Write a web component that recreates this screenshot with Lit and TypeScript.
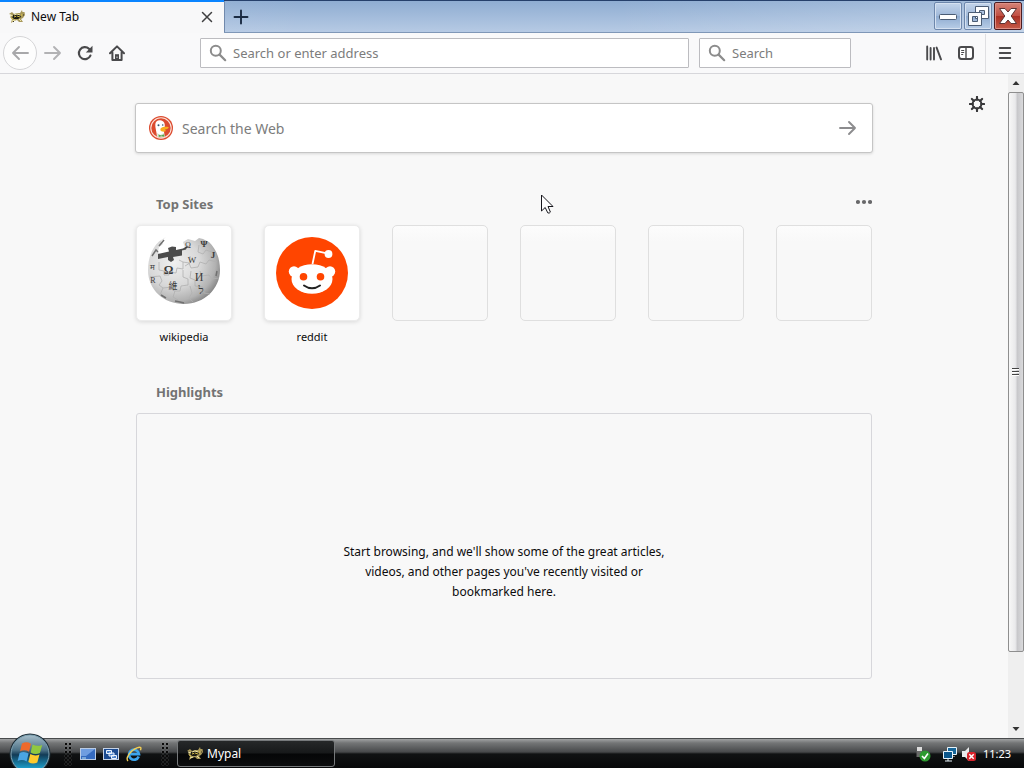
import { LitElement, html, css, svg } from "lit";
import { customElement, property } from "lit/decorators.js";

const svgIcon = (name: string, size: number, view: string, body: unknown) =>
  html`<svg class="ico ${name}" width=${size} height=${size} viewBox=${view} aria-hidden="true">${body}</svg>`;

const mascot = svgIcon("mascot", 16, "0 0 16 16", svg`
  <path d="M0 5 3 3 5 5 8 4 11 4 13 1 13.500 3 15.500 3 16 6 14 9 12 10 14 13 10 13 8 11 5 12 2 14 3 10 1 8 3 6Z" fill="#a8985a"/>
  <path d="M4 6 7 5 11 6 12 8 9 10 5 10 3 8Z" fill="#191811"/>
  <path d="M1 6 4 7M5 6 8 5 11 6M3 12 6 11M10 10 12 12" stroke="#efe5a5" fill="none"/>
  <path d="M5 8 8 7 11 8M13 5 12 7M2 9 4 10" stroke="#d2bc49" fill="none"/>
  <path d="M7 6 8 9M14 6 15 6M4 13 5 12" stroke="#332f20" fill="none"/>`);

const magnifier = svgIcon("magnifier", 18, "0 0 18 18", svg`
  <circle cx="6.8" cy="6.8" r="5" fill="none" stroke="#8c8c8c" stroke-width="2"/>
  <path d="m10.6 10.6 5.6 5.6" stroke="#8c8c8c" stroke-width="2.2" stroke-linecap="round"/>`);

const arrow = (dir: "left" | "right", color: string) => svgIcon("arrow", 18, "0 0 18 18",
  dir === "left"
    ? svg`<path d="M17 9H2M8 3 2 9l6 6" fill="none" stroke=${color} stroke-width="1.9" stroke-linecap="round" stroke-linejoin="round"/>`
    : svg`<path d="M1 9h15M10 3l6 6-6 6" fill="none" stroke=${color} stroke-width="1.9" stroke-linecap="round" stroke-linejoin="round"/>`);

const reload = svgIcon("reload", 16, "0 0 16 16", svg`
  <path d="M13.400 10.600A6 6 0 1 1 12 3.800l1.200 1.200" fill="none" stroke="#4a4a4c" stroke-width="2.200" stroke-linecap="round"/>
  <path d="M15.500 .8v6.600H8.800Z" fill="#4a4a4c"/>`);

const home = svgIcon("home", 16, "0 0 16 16", svg`
  <path d="M1 8.3 8 1.4l7 6.9M3.4 7.5V15h9.2V7.5" fill="none" stroke="#4a4a4c" stroke-width="2" stroke-linecap="round" stroke-linejoin="round"/>
  <path d="M6 15V9.2h4V15Z" fill="#4a4a4c"/><path d="M8 11.6v1.2" stroke="#fff" stroke-width="1"/>`);

const library = svgIcon("library", 16, "0 0 16 16", svg`
  <path d="M1.2 1.5v13M4.6 3v11.5M8 3v11.5M10.600 2.600 15 14.300" fill="none" stroke="#4a4a4c" stroke-width="1.900" stroke-linecap="round"/>`);

const sidebar = svgIcon("sidebar", 16, "0 0 16 16", svg`
  <rect x="1" y="2" width="14" height="12" rx="2.4" fill="#fff" stroke="#4a4a4c" stroke-width="2"/>
  <path d="M8 2v12" stroke="#4a4a4c" stroke-width="1.4"/>
  <path d="M3.2 5.500h3M3.2 7.500h3M3.2 9.500h2" stroke="#4a4a4c" stroke-width="1"/>`);

const menu = svgIcon("menu", 16, "0 0 16 16", svg`
  <path d="M2.800 3h10.400M2.800 8h10.400M2.800 13h10.400" stroke="#4a4a4c" stroke-width="2" stroke-linecap="round"/>`);

const gear = svgIcon("gear", 16, "0 0 16 16", svg`
  <circle cx="8" cy="8" r="4.400" fill="none" stroke="#38383a" stroke-width="2"/>
  <path d="M8 .8v3M8 12.200v3M.8 8h3M12.200 8h3M2.900 2.900 5 5M11 11l2.100 2.100M13.100 2.900 11 5M5 11l-2.100 2.100" stroke="#38383a" stroke-width="2.100" stroke-linecap="round"/>`);

const duck = svgIcon("duck", 24, "0 0 24 24", svg`
  <circle cx="12" cy="12" r="12" fill="#dc4b2f"/>
  <circle cx="12" cy="12" r="10.2" fill="none" stroke="#fbe3da" stroke-width="1.1"/>
  <path d="M8 20.6C7.6 16 6 11 6.3 8.3 6.6 5.400 8.600 4 11.300 4.300c3.400.400 4.700 2.800 4.500 6.200l-.8 5 .6 5.400A9.600 9.600 0 0 1 8 20.600Z" fill="#fff"/>
  <path d="M8.500 20.400 8 17l3 2 4-2 .5 3.800a9.600 9.600 0 0 1-7-.4Z" fill="#d8e2cf"/>
  <path d="m9.600 18.600 2.600 1 3-1.400v2.600l-3-.6-2.400.8Z" fill="#57a64b"/>
  <path d="M11.800 12.200c2-1.400 5.400-1.700 8-1-.2 1.600-3 2.200-4.600 2.600 1.500.4 2 .9 1.400 1.500-2.200 1-5 .2-5.200-1.300-.1-.7 0-1.300.4-1.800Z" fill="#f9ad1e"/>
  <circle cx="9.500" cy="9.300" r="1" fill="#33566f"/><circle cx="13.700" cy="9" r=".8" fill="#33566f"/>`);

const globe = svgIcon("globe", 74, "0 0 74 74", svg`
  <defs>
    <radialGradient id="ball" cx=".36" cy=".38" r=".72">
      <stop offset="0" stop-color="#f0f0f0"/><stop offset=".5" stop-color="#d8d8d8"/>
      <stop offset=".8" stop-color="#b2b2b2"/><stop offset="1" stop-color="#777"/>
    </radialGradient>
  </defs>
  <path d="M19 1 12 5.500C5 12 1 22 1 34c0 20 16 34 36 34s36-15 36-34c0-12-4-21-11-28L56 3l-4-1-4 3-7-2-5 3 2 6-4 4-20 3-3-3 1-5 4-3-2-3Z" fill="url(#ball)"/>
  <path d="m11 18 11-2.500-1-3.500 4-1.500 4 .5v3l7-1.500 5-3-2 4-4 1v5l-9 1.500 1 3-3 2-3-2v-3l-10 2Z" fill="#4c4c4c"/>
  <g fill="none" stroke="#b0b0b0" stroke-width=".8">
    <path d="M12 26v8l5 1v4h5v-3l7 1 1-5 6 1v-7l-4-2M3 41l10-1 2 5-3 4 4 3 9-1 2 4h6l1-5 7-1v-6l-5-2V34"/>
    <path d="M43 20v7l-5 3M36 26l6 1 2 5 7-1 2-5 6 2 3-4 8 2M52 9l-1 7 5 2 3-4 6 2M44 35l-1 7 5 2v6l8 1 1 6 6 1M53 35l2 5 7-1 3 4 7-1M16 52l-3 7M28 55l-2 6 5 3v3M43 50l2 7-3 5 4 4"/>
  </g>
  <g fill="#3b3b3b" font-family="Liberation Serif, serif" text-anchor="middle">
    <text x="21.500" y="38" font-size="12" font-weight="bold">Ω</text>
    <text x="45" y="27" font-size="9">W</text>
    <text x="52" y="45" font-size="12">И</text>
    <text x="26" y="53" font-size="9" font-family="Noto Sans CJK SC, sans-serif">維</text>
    <text x="54" y="58" font-size="11">ל</text>
    <text x="66" y="22" font-size="9" font-weight="bold">J</text>
    <text x="41" y="12" font-size="8">Ω</text>
    <text x="57" y="11" font-size="9" font-weight="bold">Ψ</text>
    <text x="5" y="34" font-size="8">म</text>
    <text x="6" y="47" font-size="8">R</text>
  </g>
  <path d="m5 20 4-6 2 2M12 10l5-6M28 65l5 1 4 1M14 59l5 3M69 40l1-5" fill="none" stroke="#707070" stroke-width="1.500"/>`);

const alien = svgIcon("alien", 72, "0 0 72 72", svg`
  <circle cx="36" cy="36" r="36" fill="#ff4500"/>
  <path d="m36.500 27 2.800-13.200 13 2.800" fill="none" stroke="#fff" stroke-width="1.800" stroke-linejoin="round"/>
  <circle cx="52.500" cy="17" r="3.900" fill="#fff"/>
  <circle cx="18" cy="34.500" r="5.200" fill="#fff"/><circle cx="54" cy="34.500" r="5.200" fill="#fff"/>
  <ellipse cx="36" cy="42" rx="20.500" ry="14.800" fill="#fff"/>
  <circle cx="27.500" cy="39.800" r="3.800" fill="#ff4500"/><circle cx="44.500" cy="39.800" r="3.800" fill="#ff4500"/>
  <path d="M28 48.500q8 5.600 16 0" fill="none" stroke="#222" stroke-width="2" stroke-linecap="round"/>`);

const pictures: Record<string, unknown> = { wikipedia: globe, reddit: alien };

@customElement("site-tile")
export class SiteTile extends LitElement {
  @property() name = "";

  static styles = css`
    :host { display: block; }
    .tile {
      display: flex; flex-direction: column; align-items: center; gap: 8px;
      color: #0c0c0d; text-decoration: none; font-size: 11px; line-height: 16px;
    }
    .card {
      width: 96px; height: 96px; box-sizing: border-box; border-radius: 5px;
      display: flex; align-items: center; justify-content: center;
    }
    .filled { background: #fff; border: 1px solid #ececec; box-shadow: 0 1px 4px #0c0c0d22; }
    .empty { border: 1px solid #dfdfdf; background: linear-gradient(#fcfcfc, #f8f8f8 16px); }
    .ico { display: block; }
  `;

  render() {
    return this.name
      ? html`<a class="tile" href="#${this.name}">
          <span class="card filled">${pictures[this.name]}</span><span>${this.name}</span>
        </a>`
      : html`<div class="card empty"></div>`;
  }
}

@customElement("app-root")
export class AppRoot extends LitElement {
  static properties = { sites: { attribute: false } };
  sites = ["wikipedia", "reddit", "", "", "", ""];

  static styles = css`
    :host {
      display: flex; flex-direction: column; min-height: 100vh; background: #f8f8f8;
      font-family: "Noto Sans", "Open Sans", sans-serif; font-size: 12px; color: #0c0c0d;
      overflow: hidden;
    }
    .ico { display: block; flex: none; }
    button { font: inherit; color: inherit; border: 0; padding: 0; margin: 0; background: none;
      display: flex; align-items: center; justify-content: center; }
    input { font: inherit; color: inherit; border: 0; padding: 0; margin: 0; background: none; outline: 0;
      flex: 1; min-width: 0; }
    input::placeholder { color: #7c7c7c; opacity: 1; }

    .titlebar { display: flex; height: 33px; box-sizing: border-box;
      background: linear-gradient(90deg, #ffffff22, #ffffff00 30%, #ffffff00 60%, #ffffff33), linear-gradient(#8fadd2, #b6cae4);
      border-top: 1px solid #26406b; border-bottom: 1px solid #7f97b7; }
    .tab { display: flex; align-items: center; gap: 6px; width: 224px; box-sizing: border-box;
      padding: 0 9px 2px 9px; margin: -1px 0; background: #f8f8f9; border-top: 2px solid #0a84ff; }
    .tab-title { flex: 1; }
    .tab-close { width: 16px; height: 16px; }
    .new-tab { width: 33px; border-left: 1px solid #7189ac; }
    .controls { display: flex; gap: 2px; margin-left: auto; padding: 1px 2px 2px 0; }
    .control { width: 28px; box-sizing: border-box; border: 1px solid #6d87ac; border-radius: 2px;
      background: linear-gradient(#c4d5eb, #9fb8d9 50%, #8eabd0 50%, #b8cde7);
      box-shadow: inset 0 0 0 1px #d5e1f1; }
    .danger { border-color: #4c1d22; box-shadow: inset 0 0 0 1px #df8f84;
      background: linear-gradient(#d58377, #c04e42 50%, #a92e22 50%, #c65b49); }

    .toolbar { display: flex; align-items: center; height: 41px; box-sizing: border-box; padding: 0 3px;
      background: #f9f9fa; border-bottom: 1px solid #d7d7db; }
    .tool { width: 32px; height: 32px; }
    .back { width: 34px; height: 34px; box-sizing: border-box; border: 1px solid #d5d5d7;
      border-radius: 50%; background: #fdfdfd; }
    .gap { flex: 67 1 0; }
    .field { display: flex; align-items: center; gap: 6px; height: 30px; box-sizing: border-box; min-width: 0;
      border: 1px solid #bcbcc0; background: #fff; padding: 0 8px; font-size: 13px; border-radius: 1px; }
    .address { flex: 471 1 18px; }
    .search { flex: 134 1 18px; margin-left: 10px; }
    .divider { height: 39px; border-left: 1px solid #dfdfe2; margin: 0 3px; }

    .viewport { flex: 1; display: flex; }
    .page { flex: 1; display: grid; grid-template-columns: 1fr minmax(0, 738px) 1fr; align-items: start;
      padding: 29px 23px 58px 23px; background: #f8f8f8; }
    .settings { justify-self: end; grid-column: 3; width: 16px; height: 16px; margin-top: -7px; padding: 0; }
    .content { grid-column: 2; display: flex; flex-direction: column; gap: 37px; }
    .web-search { display: flex; align-items: center; gap: 9px; height: 50px; box-sizing: border-box;
      padding: 0 15px 0 13px; background: #fff; border: 1px solid #c5c5c5; border-radius: 3px;
      box-shadow: 0 1px 3px #0c0c0d22; font-size: 14px; }
    .section { padding: 0 1px; }
    .sites { padding-top: 4px; }
    .heading { display: flex; align-items: center; justify-content: space-between; }
    .heading-text { margin: 0; padding-left: 20px; font-size: 13px; line-height: 20px; font-weight: 700; color: #737373; }
    .tiles { display: flex; justify-content: space-between; margin-top: 11px; }
    .empty-box { display: flex; justify-content: center; align-items: center; box-sizing: border-box;
      height: 266px; margin-top: 11px; padding-top: 52px; border: 1px solid #d7d7db; border-radius: 3px; }
    .message { margin: 0; width: 344px; font-size: 12px; line-height: 20px; text-align: center; }

    .scrollbar { width: 16px; display: flex; flex-direction: column; background: #efefef; }
    .step { height: 18px; }
    .thumb { flex: 561 1 0; box-sizing: border-box; border: 1px solid #8e8e8e; border-radius: 2px;
      background: linear-gradient(90deg, #f7f7f7, #e9e9eb 45%, #c8c8cb 60%, #dadadc); }
    .track { flex: 68 1 0; }

    .taskbar { display: flex; align-items: center; height: 30px; box-sizing: border-box;
      border-top: 1px solid #494b4d; color: #fff;
      background: linear-gradient(#a0a2a3, #737576 4px, #47494b 13px, #101213 15px, #070809); }
    .start { width: 42px; margin: -7px 0 -7px 9px; height: 42px; }
    .dots { width: 8px; height: 24px; margin: 0 8px 0 13px;
      background: radial-gradient(circle, #0a0a0a 1px, #8a8a8a66 1px, transparent 2px) 0 0 / 4px 4px; }
    .launchers { display: flex; gap: 7px; margin-right: 6px; }
    .task { display: flex; align-items: center; justify-content: flex-start; gap: 4px; width: 158px; height: 27px;
      box-sizing: border-box; padding: 0 9px; border: 1px solid #76797b; border-radius: 3px;
      background: linear-gradient(#262829, #17191a 48%, #050607 52%, #0c0d0e); }
    .tray { margin-left: auto; display: flex; align-items: center; gap: 3px; padding-right: 13px; }
    .status { margin-right: 8px; }
    .clock { margin-left: 3px; font-size: 11px; }
    .cursor { position: absolute; left: 541px; top: 194px; pointer-events: none; }
  `;

  renderTitlebar() {
    return html`<header class="titlebar">
      <div class="tab">${mascot}<span class="tab-title">New Tab</span>
        <button class="tab-close" aria-label="Close tab">${svgIcon("x", 12, "0 0 12 12",
          svg`<path d="m1.500 1.500 9 9m0-9-9 9" stroke="#3f3f41" stroke-width="1.500" stroke-linecap="round"/>`)}</button>
      </div>
      <button class="new-tab" aria-label="New tab">${svgIcon("plus", 16, "0 0 16 16",
        svg`<path d="M8 1.500v13M1.500 8h13" stroke="#1b2b42" stroke-width="1.900" stroke-linecap="round"/>`)}</button>
      <div class="controls">
        <button class="control" aria-label="Minimize">${svgIcon("min", 20, "0 0 20 20",
          svg`<rect x="1.500" y="8.500" width="17" height="5" rx="1" fill="#fff" stroke="#4b5c74"/>`)}</button>
        <button class="control" aria-label="Restore">${svgIcon("restore", 22, "0 0 22 22",
          svg`<path d="M8.500 1.500h13v12h-13ZM12.500 5.500h5v4h-5Z" fill="#fff" fill-rule="evenodd" stroke="#4b5c74"/>
            <path d="M1.500 7.500h13v13h-13ZM5.500 11.500h5v5h-5Z" fill="#f8fafc" fill-rule="evenodd" stroke="#4b5c74"/>`)}</button>
        <button class="control danger" aria-label="Close">${svgIcon("close", 20, "0 0 20 20",
          svg`<path d="M1.500 2.500h5.500L10 6l3-3.500h5.500L13.200 10l5.300 7.500H13L10 14l-3 3.500H1.500L6.800 10Z" fill="#fff" stroke="#5c3434"/>`)}</button>
      </div>
    </header>`;
  }

  renderToolbar() {
    return html`<nav class="toolbar">
      <button class="back" aria-label="Back">${arrow("left", "#a8a8aa")}</button>
      <button class="tool" aria-label="Forward">${arrow("right", "#b2b2b4")}</button>
      <button class="tool" aria-label="Reload">${reload}</button>
      <button class="tool" aria-label="Home">${home}</button>
      <span class="gap"></span>
      <label class="field address">${magnifier}<input aria-label="Address" placeholder="Search or enter address"></label>
      <label class="field search">${magnifier}<input aria-label="Search" placeholder="Search"></label>
      <span class="gap"></span>
      <button class="tool" aria-label="Library">${library}</button>
      <button class="tool" aria-label="Sidebars">${sidebar}</button>
      <span class="divider"></span>
      <button class="tool" aria-label="Menu">${menu}</button>
    </nav>`;
  }

  renderPage() {
    return html`<main class="page">
      <div class="content">
        <label class="web-search">${duck}<input aria-label="Search the Web" placeholder="Search the Web">
          <button aria-label="Submit search">${arrow("right", "#8c8c8e")}</button></label>
        <section class="section sites">
          <div class="heading"><h2 class="heading-text">Top Sites</h2>
            <button aria-label="Section options">${svgIcon("more", 16, "0 0 16 16",
              svg`<g fill="#68686a"><circle cx="2" cy="6" r="2.100"/><circle cx="8" cy="6" r="2.100"/><circle cx="14" cy="6" r="2.100"/></g>`)}</button>
          </div>
          <div class="tiles">${this.sites.map((s) => html`<site-tile .name=${s}></site-tile>`)}</div>
        </section>
        <section class="section">
          <div class="heading"><h2 class="heading-text">Highlights</h2></div>
          <div class="empty-box"><p class="message">Start browsing, and we'll show some of the great articles, videos, and other pages you've recently visited or bookmarked here.</p></div>
        </section>
      </div>
      <button class="settings" aria-label="Settings">${gear}</button>
    </main>`;
  }

  renderScrollbar() {
    const tip = (d: string) => svgIcon("tip", 10, "0 0 10 10", svg`<path d=${d} fill="#333"/>`);
    return html`<div class="scrollbar">
      <button class="step" aria-label="Scroll up">${tip("M5 3 8.5 7h-7Z")}</button>
      <button class="thumb" aria-label="Scroll position">${svgIcon("grip", 8, "0 0 8 8",
        svg`<path d="M0 .5h7M0 3.500h7M0 6.500h7" stroke="#444"/><path d="M0 1.500h7M0 4.500h7M0 7.500h7" stroke="#fff"/>`)}</button>
      <span class="track"></span>
      <button class="step" aria-label="Scroll down">${tip("M1.500 3h7L5 7Z")}</button>
    </div>`;
  }

  renderTaskbar() {
    return html`<footer class="taskbar">
      <button class="start" aria-label="Start">${svgIcon("orb", 42, "0 0 42 42", svg`
        <defs>
          <linearGradient id="shell" x2="0" y2="1"><stop stop-color="#a8bfcb"/><stop offset=".4" stop-color="#4c7186"/><stop offset=".52" stop-color="#123b56"/><stop offset="1" stop-color="#20bff0"/></linearGradient>
        </defs>
        <circle cx="21" cy="21" r="20.500" fill="#1c2c36"/><circle cx="21" cy="21" r="19" fill="url(#shell)" stroke="#7fa4b5"/>
        <path d="M13 10.500q4.500-2.600 9 .2l-2 8q-4.300-2.700-9-.5Z" fill="#ee6a2c"/>
        <path d="M23.600 11.500q4.800 2.500 9.600.4l-2.300 8q-4.600 2.300-9.300-.5Z" fill="#91c840"/>
        <path d="M10.600 20q4.600-2.300 9 .5l-2 8q-4.300-2.700-9-.5Z" fill="#4aa5e3"/>
        <path d="M21.300 21q4.600 2.700 9.200.5l-2.200 8q-4.600 2.300-9-.5Z" fill="#ffca2c"/>`)}</button>
      <span class="dots"></span>
      <div class="launchers">
        <button aria-label="Show desktop">${svgIcon("desk", 16, "0 0 16 16", svg`
          <rect x=".5" y="2.500" width="15" height="11" fill="#356bc0" stroke="#b9cbe4"/><path d="M1 3h14L6 10H1Z" fill="#6f9de0"/><path d="M2 12h4" stroke="#b7e1f5"/>`)}</button>
        <button aria-label="Switch windows">${svgIcon("switch", 16, "0 0 16 16", svg`
          <rect x=".5" y="2.500" width="15" height="11" fill="#1c4b91" stroke="#c6d3e6"/>
          <path d="M3.500 4.500h5v3h-5ZM6 7h5v3H6ZM8.500 9.500h5v3h-5Z" fill="#4d82c9" stroke="#edf4ff"/>`)}</button>
        <button aria-label="Internet Explorer">${svgIcon("browser", 16, "0 0 16 16", svg`
          <path d="M12.700 10.500A5 5 0 1 1 13 8.200H4.500" fill="none" stroke="#3ba4ec" stroke-width="2.700"/>
          <path d="M2 15C-1 12 5 4 11 1.800c4-1.400 4.500 0 3.400 2.400" fill="none" stroke="#f3cf55" stroke-width="1.400"/>`)}</button>
      </div>
      <span class="dots"></span>
      <button class="task">${mascot}<span>Mypal</span></button>
      <div class="tray">
        <span class="status">${svgIcon("usb", 16, "0 0 16 16", svg`
          <path d="M2 1h5v4H2Z" fill="#ddd"/><path d="M1.500 5h6v6h-6Z" fill="#696969"/>
          <circle cx="10" cy="10" r="5.500" fill="#2d9a2f"/><path d="m7 10 2.400 2.500L13 7.500" fill="none" stroke="#fff" stroke-width="1.600"/>`)}</span>
        ${svgIcon("net", 16, "0 0 16 16", svg`
          <path d="M5.500 1.500h9v7h-9Z" fill="#176699" stroke="#e8f4fb"/><path d="M1.500 5.500h9v7h-9Z" fill="#0c578c" stroke="#e8f4fb"/><path d="M3 15h7M6 13v2M12 10v1" stroke="#e8f4fb"/>`)}
        ${svgIcon("sound", 16, "0 0 16 16", svg`
          <path d="M1 5h3l4-4v14l-4-4H1Z" fill="#e9ebec"/><rect x="6" y="6" width="9" height="9" rx="2.500" fill="#d9242c"/>
          <path d="m8.300 8.300 4.400 4.400m0-4.400-4.400 4.400" stroke="#fff" stroke-width="1.500"/>`)}
        <time class="clock">11:23</time>
      </div>
    </footer>`;
  }

  render() {
    return html`${this.renderTitlebar()}${this.renderToolbar()}
      <div class="viewport">${this.renderPage()}${this.renderScrollbar()}</div>
      ${this.renderTaskbar()}
      <svg class="cursor" width="13" height="21" viewBox="0 0 13 21" aria-hidden="true">
        <path d="M.5 1v16l3.700-3.500 2.600 5.400q1.500.8 2.600-.8L7 12.500h5Z" fill="#fff" stroke="#16161c"/>
      </svg>`;
  }
}
